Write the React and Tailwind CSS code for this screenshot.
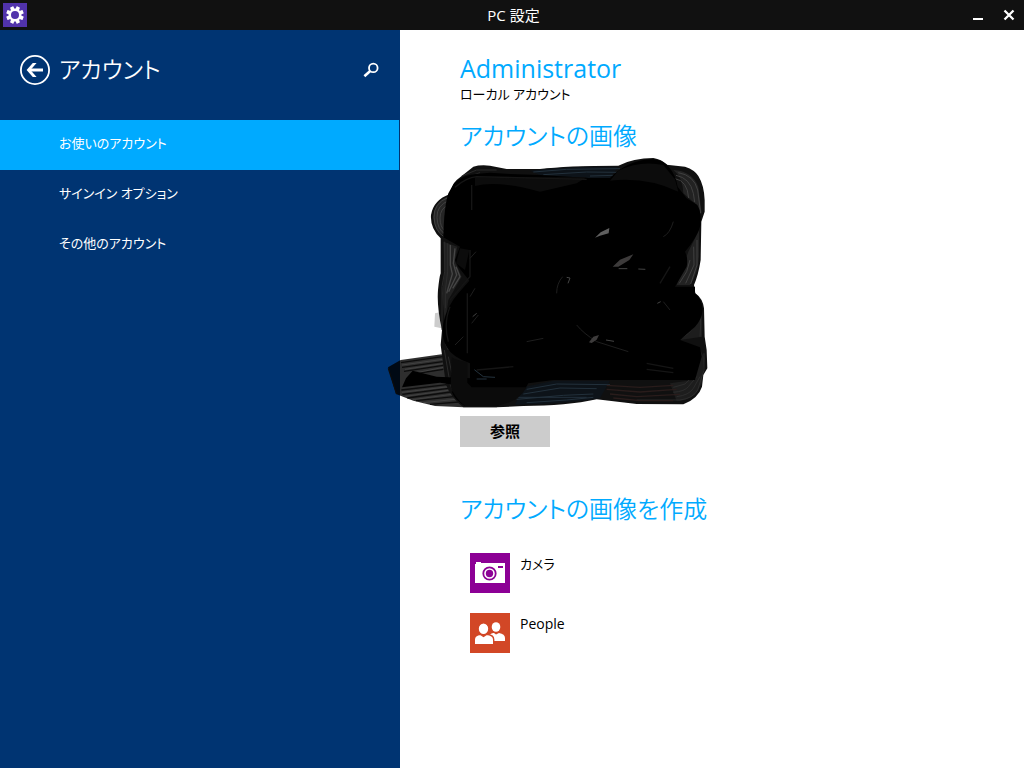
import { useState } from "react";

const FONT = "font-['Open_Sans','Noto_Sans_CJK_JP',sans-serif] [font-feature-settings:'palt']";

const navItems = ["お使いのアカウント", "サインイン オプション", "その他のアカウント"];

const GearIcon = () => (
  <svg viewBox="0 0 24 24" className="h-6 w-6 shrink-0 bg-[#5133ab]" aria-hidden="true">
    <g fill="#fff" transform="translate(12 12)">
      {[22.5, 67.5, 112.5, 157.5, 202.5, 247.5, 292.5, 337.5].map((deg) => (
        <rect key={deg} x="-1.8" y="-8.8" width="3.6" height="4" rx="0.4" transform={`rotate(${deg})`} />
      ))}
    </g>
    <circle cx="12" cy="12" r="5.2" fill="none" stroke="#fff" strokeWidth="2.4" />
  </svg>
);

const BackIcon = () => (
  <svg viewBox="0 0 30 30" className="h-[30px] w-[30px]" fill="none" stroke="#fff" aria-hidden="true">
    <circle cx="15" cy="15" r="14.1" strokeWidth="1.8" />
    <path d="M23 15H9" strokeWidth="3" />
    <path fill="#fff" stroke="none" d="M12.8 8h3.8l-6.2 7 6.200 7h-3.800l-6.200-7z" />
  </svg>
);

const SearchIcon = () => (
  <svg viewBox="0 0 16 16" className="h-4 w-4" fill="none" stroke="#fff" aria-hidden="true">
    <circle cx="10.3" cy="5.9" r="4.3" strokeWidth="1.8" />
    <path d="M7.2 9L1.400 14.200" strokeWidth="2.6" />
  </svg>
);

const CameraIcon = () => (
  <svg viewBox="0 0 40 40" className="h-10 w-10 shrink-0 bg-[#8c0095]" aria-hidden="true">
    <path fill="#fff" d="M5 11h1V9h5v1h24v20H5z" />
    <path fill="#8c0095" d="M28 13h5v2h-5z" />
    <circle cx="19.5" cy="20.5" r="6.2" fill="#fff" stroke="#8c0095" strokeWidth="1.8" />
    <circle cx="19.5" cy="20.5" r="3.7" fill="#8c0095" />
  </svg>
);

const PeopleIcon = () => (
  <svg viewBox="0 0 40 40" className="h-10 w-10 shrink-0 bg-[#d24726]" aria-hidden="true">
    <g fill="#fff">
      <ellipse cx="26" cy="14" rx="4.3" ry="4.8" />
      <path d="M19 28v-4c0-3 3-4 5-4l2 1.5L29 20c4 .5 6 2.5 6 5v3z" />
      <g stroke="#d24726" strokeWidth="1.4">
        <ellipse cx="13.5" cy="15.8" rx="5.4" ry="5.9" />
        <path d="M4.3 31.7v-5.2c0-3.5 3.2-4.8 6.2-5.2l3 2 3-2c4 .4 7.2 1.7 7.2 5.2v5.2z" />
      </g>
    </g>
  </svg>
);

// marker strokes painted over the account picture
const Scribble = () => (
  <svg
    viewBox="0 0 1020 810"
    className="pointer-events-none absolute -left-20 -top-2.5 h-[270px] w-[340px] max-w-none"
    fill="none"
    strokeLinejoin="round"
    role="img"
    aria-label="アカウントの画像"
  >
    <path fill="#ccc" d="M165 490l20 -5v50l-22 -5z" />
    <path
      fill="#000"
      fillOpacity="0.82"
      d="M24 652L62 630L185 613L215 640L440 700L400 745L350 772H250L165 768L100 752L48 732z"
    />
    <g stroke="#0c0c0c" strokeWidth="4">
      <path d="M63 638L188 620M66 652L188 635M72 664L190 646M100 672L190 658M64 720L200 704M67 733L205 715M82 744L212 726M108 752L222 740M150 763L235 756M25 655L50 732" />
    </g>
    <g stroke="#4c4c4c" strokeWidth="2">
      <path d="M66 645L188 628M75 658L188 641M110 668L190 652M66 727L205 710M76 739L205 721M98 749L215 733M130 758L225 748" />
    </g>
    <path
      fill="#101010"
      d="M280 50Q300 44 330 47L380 57L480 57Q560 47 715 47Q760 24 820 24Q845 28 860 44L915 50Q945 60 955 78Q972 105 974 150V185L964 215L962 330Q955 375 942 405L946 430Q968 445 972 475L974 560L980 600L982 655L970 675L966 710Q955 745 910 763L770 762L650 748Q560 768 430 768L350 772H250Q215 745 198 705L182 585L186 540Q170 470 174 420Q178 380 182 370V265Q150 235 153 195Q160 150 210 132Q215 105 230 90z"
    />
    <path fill="#262626" d="M160 200Q165 150 205 140L194 200L198 258Q162 245 160 200z" />
    <path fill="#202020" d="M190 275L232 290L225 335L245 380L205 450L195 520L186 430L194 370z" />
    <path fill="#222" d="M880 60Q935 62 955 110L965 190L950 165L910 130Q908 80 880 60zM925 305L957 240V320Q955 370 930 405L890 405z" />
    <path fill="#1d1d1d" d="M948 445Q972 480 966 560L900 570L945 530L965 480zM960 600L974 625L965 700Q945 750 890 754L870 700L940 690z" />
    <g stroke="#464646" strokeWidth="2.5">
      <path d="M205 142Q160 160 162 202T192 260" />
      <path d="M206 152Q170 166 171 202T194 251" />
      <path d="M206 164Q180 176 180 204T195 242" />
      <path d="M211 285V345L217 372L200 430M225 295L220 340L230 375L206 425M228 350L240 380L218 415" strokeWidth="4" />
      <path d="M895 68Q942 76 953 120L962 190M888 76Q930 84 940 130L944 156M885 86Q922 92 926 144M930 330L920 365L898 400M941 290L942 345L917 400M951 270V345L932 402" />
    </g>
    <g stroke="#2f2f2f" strokeWidth="2.5">
      <path d="M194 275V365L186 410V540M203 280V365L196 420V475" />
      <path d="M954 460Q966 490 960 560M940 530Q930 552 900 565M972 610V660L953 720Q940 745 900 750H770M960 680L940 715Q928 735 890 740M950 680L925 710Q915 724 880 727M938 680L915 702L880 712" />
      <path d="M196 580L205 600M193 600L212 710L250 755H360M205 620L224 710L258 745H350M218 640L237 710L270 735M234 645L250 705" />
      <path d="M245 78L290 60H350M260 82L300 68" />
    </g>
    <path fill="#0d1319" d="M450 62Q560 48 715 50L690 84L625 84L480 75zM430 712L520 692H690L660 745Q560 762 405 764z" />
    <g stroke="#22303b" strokeWidth="3">
      <path d="M460 66L560 58L720 56M490 74L620 66L710 67M630 78L700 76" />
      <path d="M440 718L530 702L690 704M430 732L540 714L650 716M415 742H620M410 748L550 736L640 732M440 758L560 750L640 742" />
    </g>
    <g stroke="#291c1b" strokeWidth="4">
      <path d="M680 706L780 712L880 706M680 718L780 726L890 718M690 732L770 740L900 733M700 744L780 752H880" />
    </g>
    <path
      fill="#000"
      d="M222 100Q250 75 285 72L330 68L390 72L480 75L625 84L690 84Q750 26 820 28Q850 30 866 50Q888 75 893 110L920 145L952 165Q965 190 962 225Q950 265 915 305Q925 325 920 350L885 410H945V430Q965 445 968 480Q965 510 945 530L900 570L960 592L965 620L945 690H570L520 690L445 700Q430 730 405 745L350 768H255Q225 750 215 725L270 700V640Q215 620 200 590Q182 560 190 520Q200 470 235 430L268 392L235 350L225 330L240 290L190 262Q192 170 205 130z"
    />
    <path fill="#000" d="M66 712L78 685L98 662L170 680L275 685L270 712L180 698z" />
    <path fill="#0b0b0b" d="M215 622Q240 635 262 636V698L275 712H440Q420 745 390 756L350 768H255Q225 745 212 710z" />
    <path fill="#0c0c0c" d="M285 82H620L590 100L480 125Q350 90 285 108zM715 62Q780 30 850 45L885 88L895 125Q800 80 690 92zM240 295L268 300L255 360L228 340z" />
    <path
      stroke="#151515"
      strokeWidth="4"
      d="M225 112Q260 82 290 80L620 88M275 105V180M270 300V380L210 450M262 430V610M290 660L400 650M800 640L880 655M800 658L880 668M840 400L870 350M210 470Q190 520 205 575"
    />
    <path
      stroke="#1e1e1e"
      strokeWidth="3"
      d="M225 585L250 560M275 520L295 495M530 430Q530 400 548 380M850 455L870 480M590 525Q610 550 650 575L745 605M440 575L490 565M270 325L288 305M270 440L285 415M880 215Q870 250 850 260"
    />
    <path fill="#777" fillOpacity="0.8" d="M645 263L662 247L688 234L686 250L660 257z" />
    <path fill="#3d3b3b" d="M698 350L720 329L760 313L748 330L715 350zM627 577L640 560L657 555L650 569L635 579z" />
    <path
      stroke="#444"
      strokeWidth="3"
      d="M560 382L570 384L564 400M278 500L290 490M832 460L842 455M716 356H742M775 357L796 358M678 570L702 574"
    />
    <path stroke="#24333e" strokeWidth="3" d="M283 659L310 680L345 682M290 687H320" />
  </svg>
);

const App = () => {
  const [active, setActive] = useState(0);

  const handleNav = (e, i) => {
    e.preventDefault();
    setActive(i);
  };

  return (
    <div className={`flex min-h-screen flex-col bg-white text-[13px] text-black ${FONT}`}>
      <header className="grid h-[30px] grid-cols-[1fr_auto_1fr] items-center bg-[#111] pl-[3px] text-white">
        <GearIcon />
        <h1 className="text-[15px] leading-5">PC 設定</h1>
        <div className="flex justify-end">
          <button aria-label="最小化" className="flex h-[30px] w-[31px] items-center justify-center">
            <svg viewBox="0 0 12 12" className="h-3 w-3" aria-hidden="true">
              <path fill="#fff" d="M1 9h10v2H1z" />
            </svg>
          </button>
          <button aria-label="閉じる" className="flex h-[30px] w-[31px] items-center justify-center">
            <svg viewBox="0 0 12 12" className="h-3 w-3" aria-hidden="true">
              <path stroke="#fff" strokeWidth="2.3" d="M1.5 1.5l9 9M10.5 1.5l-9 9" />
            </svg>
          </button>
        </div>
      </header>

      <div className="flex flex-1">
        <aside className="w-[400px] shrink-0 bg-[#003472] text-white">
          <div className="mb-2.5 flex h-20 items-center pl-5 pr-[21px]">
            <button aria-label="戻る">
              <BackIcon />
            </button>
            <h2 className="ml-[9px] flex-1 pb-0.5 text-[23px] font-[350] leading-9">アカウント</h2>
            <button aria-label="検索">
              <SearchIcon />
            </button>
          </div>
          <nav className="pr-px">
            {navItems.map((item, i) => (
              <a
                key={item}
                href="#"
                onClick={(e) => handleNav(e, i)}
                className={`flex h-[50px] items-center pb-0.5 pl-[59px] ${active === i ? "bg-[#00aaff]" : ""}`}
              >
                {item}
              </a>
            ))}
          </nav>
        </aside>

        <main className="flex-1 px-[60px] pt-5">
          <h2 className="text-[25px] leading-9 text-[#00aaff]">Administrator</h2>
          <p className="leading-4">ローカル アカウント</p>

          <h3 className="mt-4 text-[24px] font-[350] leading-9 text-[#00aaff]">アカウントの画像</h3>
          <div className="relative mt-1.5 h-60">
            <Scribble />
          </div>
          <button className="mt-4 h-[31px] w-[90px] bg-[#ccc] text-[15px] font-bold">参照</button>

          <h3 className="mt-11 text-[24px] font-[350] leading-9 text-[#00aaff]">アカウントの画像を作成</h3>
          <div className="mt-[26px] flex flex-col items-start gap-5 pl-2.5">
            <button className="flex items-start gap-2.5 leading-[22px]">
              <CameraIcon />
              カメラ
            </button>
            <button className="flex items-start gap-2.5 text-[14px] leading-[22px]">
              <PeopleIcon />
              People
            </button>
          </div>
        </main>
      </div>
    </div>
  );
};

export default App;
